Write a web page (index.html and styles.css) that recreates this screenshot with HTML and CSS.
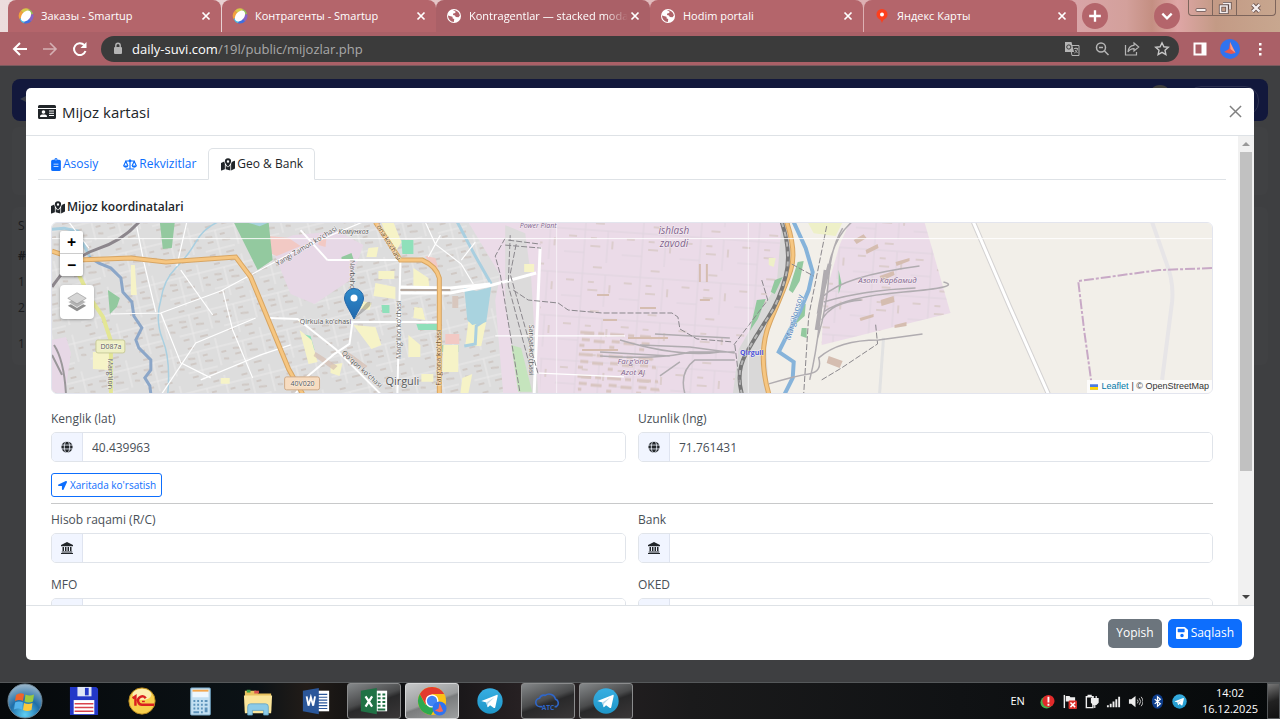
FILE: index.html
```html
<!DOCTYPE html>
<html lang="uz">
<head>
  <meta charset="UTF-8" />
  <title>Kontragentlar — stacked modal</title>
  <meta name="viewport" content="width=device-width, initial-scale=1.0" />
  <link rel="stylesheet" href="styles.css">
</head>
<body>

<!-- Icons -->
<svg class="sprite" width="0" height="0" aria-hidden="true">
  <defs>
    <linearGradient id="tg-bg" x1="0" y1="0" x2="0" y2="1"><stop offset="0" stop-color="#37aee2"/><stop offset="1" stop-color="#1e96c8"/></linearGradient>
    <radialGradient id="orb" cx=".5" cy=".9" r=".9"><stop offset="0" stop-color="#5fd0f5"/><stop offset=".5" stop-color="#1f6ea8"/><stop offset="1" stop-color="#9fb9cc"/></radialGradient>
    <linearGradient id="pin-bg" x1="0" y1="0" x2="0" y2="1"><stop offset="0" stop-color="#2e8bcb"/><stop offset="1" stop-color="#2268ad"/></linearGradient>
  </defs>
  <symbol id="i-close" viewBox="0 0 10 10"><path d="M1.500 1.500l7 7M8.500 1.500l-7 7" fill="none" stroke="currentColor" stroke-width="1.700"/></symbol>
  <symbol id="i-smartup" viewBox="0 0 16 16">
    <path d="M8 8L1.500 11A7.500 7.500 0 0 1 3 2.500z" fill="#f2a13c"/>
    <path d="M8 8L3 2.500A7.500 7.500 0 0 1 11 1z" fill="#d8c84a"/>
    <path d="M8 8l3-7a7.500 7.500 0 0 1 4.200 5z" fill="#8fbf5a"/>
    <path d="M8 8l7.200-2A7.500 7.500 0 0 1 13 13.500z" fill="#8a62c4"/>
    <path d="M8 8l5 5.500A7.500 7.500 0 0 1 6 15.200z" fill="#3f6fe0"/>
    <path d="M8 8l-2 7.200A7.500 7.500 0 0 1 1.500 11z" fill="#45bfe8"/>
    <ellipse cx="8" cy="8" rx="6.300" ry="4.200" transform="rotate(-50 8 8)" fill="#fff"/>
  </symbol>
  <symbol id="i-world" viewBox="0 0 16 16">
    <circle cx="8" cy="8" r="7" fill="#fff"/>
    <path d="M2 7.500l4.500 1.300.2 1.700 1.500.6-.3 2.900C4.500 13.800 2 11 2 7.500zM6.800 2.300c3.400-.7 6.600 1.800 7.100 5.100l-1.400 1.800-2.700-.2-.8-1.500-2-.4.200-1.600 2.100-.6.200-1.400z" fill="#b0636a"/>
  </symbol>
  <symbol id="i-ypin" viewBox="0 0 16 16"><path d="M8 1a5.500 5.500 0 0 1 5.500 5.500c0 3-2.400 4.300-3.800 5.200C8.700 12.500 8.500 14 8 15c-.5-1-.7-2.500-1.700-3.300C4.900 10.800 2.500 9.500 2.500 6.500A5.500 5.500 0 0 1 8 1z" fill="#fc3f1d"/><circle cx="8" cy="6.500" r="2" fill="#fff"/></symbol>
  <symbol id="i-card" viewBox="0 0 18 14"><path fill-rule="evenodd" d="M1.500 0h15A1.500 1.500 0 0 1 18 1.500V3H0V1.500A1.500 1.500 0 0 1 1.500 0zM0 4h18v8.500a1.500 1.500 0 0 1-1.500 1.500h-15A1.500 1.500 0 0 1 0 12.500zM2 12h7c0-1.800-1-2.500-2-2.500H4c-1 0-2 .7-2 2.500zM5.500 5.200a1.800 1.800 0 1 0 0 3.600 1.800 1.800 0 0 0 0-3.600zM11 5.500v1h5v-1zM11 7.800v1h5v-1zM11 10v1h5v-1z" fill="currentColor"/></symbol>
  <symbol id="i-clip" viewBox="0 0 12 16"><path fill-rule="evenodd" d="M6 0a2 2 0 0 1 1.900 2H10a2 2 0 0 1 2 2v10a2 2 0 0 1-2 2H2a2 2 0 0 1-2-2V4a2 2 0 0 1 2-2h2.100A2 2 0 0 1 6 0zM6 1.500a.8.8 0 1 0 0 1.600.8.8 0 0 0 0-1.600zM3 7v1h6V7zM3 10v1h6v-1z" fill="currentColor"/></symbol>
  <symbol id="i-scale" viewBox="0 0 20 16"><path d="M10 1.500V14M4.500 14.500h11M3.500 3H8.200M11.800 3h4.700M4 3.500L1.200 9.500M4 3.500l2.800 6M16 3.500l-2.800 6M16 3.500l2.800 6" fill="none" stroke="currentColor" stroke-width="1.600" stroke-linecap="round"/><circle cx="10" cy="2.800" r="2" fill="currentColor"/><path d="M.3 9.500h7.400a3.700 3 0 0 1-7.400 0zM12.300 9.500h7.400a3.700 3 0 0 1-7.400 0z" fill="currentColor"/></symbol>
  <symbol id="i-map" viewBox="0 0 18 16"><path fill-rule="evenodd" d="M9 0a4 4 0 0 1 4 4c0 2-2.600 5.300-3.600 6.500a.5.500 0 0 1-.8 0C7.600 9.300 5 6 5 4a4 4 0 0 1 4-4zm0 2.600a1.500 1.500 0 1 0 0 3 1.500 1.500 0 0 0 0-3zM0 6l4.200-1.700C4.500 6 5 7 5 7v7L.8 15.800A.6.6 0 0 1 0 15.300zM6 8.500c.8 1.300 1.400 2 1.800 2.500.6.700 1.800.7 2.400 0 .4-.5 1-1.200 1.800-2.500v7.200l-6-1.700zM13 7s.6-1.300.9-2.300L17.200 3.300a.6.6 0 0 1 .8.500v9.300L13 15.600z" fill="currentColor"/></symbol>
  <symbol id="i-globe" viewBox="0 0 16 16"><circle cx="8" cy="8" r="7.500" fill="currentColor"/><g fill="none" stroke="#f1f5ff" stroke-width="1.100"><ellipse cx="8" cy="8" rx="3.600" ry="8"/><path d="M0 5.400h16M0 10.600h16"/></g></symbol>
  <symbol id="i-bank" viewBox="0 0 16 16"><path d="M8 0l8 4v1.500H0V4zM2 6.500h2V12H2zM5.300 6.500h2V12h-2zM8.700 6.500h2V12h-2zM12 6.500h2V12h-2zM1 12.500h14V14H1zM0 14.500h16V16H0z" fill="currentColor"/></symbol>
  <symbol id="i-arrow" viewBox="0 0 512 512"><path d="M444.520 3.520L28.740 195.420c-47.970 22.390-31.980 92.750 19.190 92.750h175.910v175.910c0 51.170 70.360 67.170 92.750 19.190l191.900-415.780c15.990-38.380-25.590-79.970-63.970-63.970z" fill="currentColor"/></symbol>
  <symbol id="i-save" viewBox="0 32 448 448"><path d="M433.941 129.941l-83.882-83.882A48 48 0 0 0 316.118 32H48C21.490 32 0 53.490 0 80v352c0 26.510 21.490 48 48 48h352c26.510 0 48-21.490 48-48V163.882a48 48 0 0 0-14.059-33.941zM224 416c-35.346 0-64-28.654-64-64s28.654-64 64-64 64 28.654 64 64-28.654 64-64 64zm96-304.520V212c0 6.627-5.373 12-12 12H76c-6.627 0-12-5.373-12-12V108c0-6.627 5.373-12 12-12h228.520c3.183 0 6.235 1.264 8.485 3.515l3.480 3.480A11.996 11.996 0 0 1 320 111.480z" fill="currentColor"/></symbol>
  <symbol id="i-telegram" viewBox="0 0 28 28"><circle cx="14" cy="14" r="13.500" fill="url(#tg-bg)"/><path d="M5.500 13.700L21 7.500c.8-.3 1.400.2 1.200 1.200l-2.600 12c-.2.900-.8 1.100-1.500.7l-4-3-2 1.900c-.4.400-.8.400-.9-.2l-1.200-4.500-4.400-1.300c-.8-.2-.8-.4-.1-.6z" fill="#fff"/><path d="M10 15.600l8.800-5.500-7 6.700-.4 3z" fill="#b9d9ea"/></symbol>
</svg>

<!-- Browser tabs -->
<header class="tabstrip">
  <div class="tab"><svg class="fav"><use href="#i-smartup"/></svg><span class="tab-title">Заказы - Smartup</span><button class="tab-close" aria-label="Close"><svg><use href="#i-close"/></svg></button></div>
  <div class="tab"><svg class="fav"><use href="#i-smartup"/></svg><span class="tab-title">Контрагенты - Smartup</span><button class="tab-close" aria-label="Close"><svg><use href="#i-close"/></svg></button></div>
  <div class="tab active"><svg class="fav"><use href="#i-world"/></svg><span class="tab-title fade">Kontragentlar — stacked moda</span><button class="tab-close" aria-label="Close"><svg><use href="#i-close"/></svg></button></div>
  <div class="tab"><svg class="fav"><use href="#i-world"/></svg><span class="tab-title">Hodim portali</span><button class="tab-close" aria-label="Close"><svg><use href="#i-close"/></svg></button></div>
  <div class="tab"><svg class="fav"><use href="#i-ypin"/></svg><span class="tab-title">Яндекс Карты</span><button class="tab-close" aria-label="Close"><svg><use href="#i-close"/></svg></button></div>
  <button class="round-btn" aria-label="New tab"><svg viewBox="0 0 12 12"><path d="M6 1v10M1 6h10" fill="none" stroke="#fff" stroke-width="2"/></svg></button>
  <button class="round-btn list-btn" aria-label="Search tabs"><svg viewBox="0 0 12 12"><path d="M2 4l4 4 4-4" fill="none" stroke="#fff" stroke-width="2"/></svg></button>
  <div class="win-controls">
    <button aria-label="Minimize"><svg viewBox="0 0 14 14"><rect x="2" y="7.500" width="10" height="3" rx="1" fill="#f5eeee" stroke="#6a5350" stroke-width=".8"/></svg></button>
    <button aria-label="Restore"><svg viewBox="0 0 14 14"><g fill="none" stroke="#5b4a48" stroke-width="3.200"><path d="M5 2.500h7v6M2.500 5h6.500v6.500H2.500z"/></g><g fill="none" stroke="#f5eeee" stroke-width="1.700"><path d="M5 2.500h7v6M2.500 5h6.500v6.500H2.500z"/></g></svg></button>
    <button class="win-x" aria-label="Close window"><svg viewBox="0 0 14 14"><path d="M3.500 3.500l7 7M10.500 3.500l-7 7" stroke="#6a5350" stroke-width="4"/><path d="M3.500 3.500l7 7M10.500 3.500l-7 7" stroke="#f5eeee" stroke-width="2.400"/></svg></button>
  </div>
</header>

<!-- Toolbar -->
<nav class="toolbar">
  <button class="nav-btn" aria-label="Back"><svg viewBox="0 0 16 16"><path d="M15 8H2.500M8 2L2 8l6 6" fill="none" stroke="#fff" stroke-width="2"/></svg></button>
  <button class="nav-btn dim" aria-label="Forward"><svg viewBox="0 0 16 16"><path d="M1 8h12.500M8 2l6 6-6 6" fill="none" stroke="#fff" stroke-width="1.600"/></svg></button>
  <button class="nav-btn" aria-label="Reload"><svg viewBox="0 0 16 16"><path d="M13.500 10A5.900 5.900 0 1 1 12.200 4" fill="none" stroke="#fff" stroke-width="2"/><path d="M14.500 1v6h-6z" fill="#fff"/></svg></button>
  <div class="omnibox">
    <svg class="lock" viewBox="0 0 10 13"><rect x="1" y="5" width="8" height="7" rx="1" fill="#b5b5b5"/><path d="M2.800 5.500V3.500a2.200 2.200 0 0 1 4.400 0v2" fill="none" stroke="#b5b5b5" stroke-width="1.400"/></svg>
    <span class="url"><b>daily-suvi.com</b>/19l/public/mijozlar.php</span>
    <button class="omni-btn" aria-label="Translate"><svg viewBox="0 0 16 16"><path d="M6 4.500h9v10H8z" fill="none" stroke="#b5b5b5"/><path d="M1 1h6.500l2.500 10H1z" fill="#b5b5b5"/><circle cx="4.800" cy="6" r="2.100" fill="none" stroke="#3b3b3b"/><path d="M10 7.500h4M12 6.500v1M13.500 8c-.5 2-2 3.500-3 4M11 9l2.500 3" fill="none" stroke="#b5b5b5" stroke-width=".9"/></svg></button>
    <button class="omni-btn" aria-label="Zoom"><svg viewBox="0 0 16 16"><g fill="none" stroke="#b5b5b5" stroke-width="1.500"><circle cx="7" cy="6.500" r="4.500"/><path d="M10.500 10l4 4M5 6.500h4"/></g></svg></button>
    <button class="omni-btn" aria-label="Share"><svg viewBox="0 0 16 16"><g fill="none" stroke="#b5b5b5" stroke-width="1.200"><path d="M1.500 4v10h11v-3"/><path d="M10 2l4.700 4L10 10V7.700C7.500 7.700 5.500 8.500 4 11c.3-4 2.500-6.500 6-6.700z"/></g></svg></button>
    <button class="omni-btn" aria-label="Bookmark"><svg viewBox="0 0 16 16"><path d="M8 1.800l1.900 4 4.400.5-3.300 3 .9 4.300L8 11.400l-3.900 2.200.9-4.300-3.300-3 4.400-.5z" fill="none" stroke="#c8c8c8" stroke-width="1.400"/></svg></button>
  </div>
  <button class="nav-btn" aria-label="Side panel"><svg viewBox="0 0 16 16"><path fill-rule="evenodd" d="M1.500 1.500h13v13h-13zM3.500 3.500v9h6v-9z" fill="#fff"/></svg></button>
  <button class="nav-btn profile" aria-label="Profile"><svg viewBox="0 0 20 20"><circle cx="10" cy="10" r="10" fill="#2f73f0"/><path d="M10 3l5.500 11-4.500 1-7-2 5-3z" fill="#e8584e"/><path d="M10 3l5.500 11-5-4z" fill="#f9a08e"/></svg></button>
  <button class="nav-btn" aria-label="Menu"><svg viewBox="0 0 16 16"><g fill="#fff"><rect x="7" y="2" width="2.500" height="2.500"/><rect x="7" y="7" width="2.500" height="2.500"/><rect x="7" y="12" width="2.500" height="2.500"/></g></svg></button>
</nav>

<!-- Page with modal -->
<main class="page">
  <div class="navbar"><span class="back">◀</span><span class="bell"></span><span class="exit"></span></div>
  <div class="card filters"></div>
  <div class="card list">
    <p>S</p>
    <p><b>#</b></p>
    <p>1</p>
    <p>2</p>
    <p class="pager">1</p>
  </div>

  <section class="modal" role="dialog" aria-labelledby="modal-title">
    <div class="modal-header">
      <svg class="title-icon"><use href="#i-card"/></svg>
      <h1 id="modal-title">Mijoz kartasi</h1>
      <button class="btn-close" aria-label="Yopish"><svg viewBox="0 0 14 14"><path d="M1 1l12 12M13 1L1 13" fill="none" stroke="#808080" stroke-width="1.600"/></svg></button>
    </div>

    <div class="modal-main">
      <div class="modal-body">
        <div class="nav-tabs">
          <a href="#asosiy"><svg class="clip"><use href="#i-clip"/></svg>Asosiy</a>
          <a href="#rekvizitlar"><svg><use href="#i-scale"/></svg>Rekvizitlar</a>
          <a href="#geo" class="active"><svg><use href="#i-map"/></svg>Geo &amp; Bank</a>
        </div>

        <div class="pane" id="geo">
          <h2><svg><use href="#i-map"/></svg>Mijoz koordinatalari</h2>

          <div class="map">
            <svg class="tiles" viewBox="51 222 1162 172" preserveAspectRatio="xMidYMid slice">
              <defs>
                <pattern id="homes" width="46" height="38" patternUnits="userSpaceOnUse" patternTransform="rotate(-14)">
                  <path d="M0 9h46M0 28h30M14 9v29M34 0v28" stroke="#ebeaea" stroke-width="1" fill="none"/>
                  <path d="M3 14l7 1M4 20h6M18 14h5M19 20l8 1M37 15h5M38 22l5 1M3 33h6M20 33h8M5 4h6M22 4h6" stroke="#d0c9c5" stroke-width="2"/>
                </pattern>
                <pattern id="plant" width="58" height="44" patternUnits="userSpaceOnUse" patternTransform="rotate(4)">
                  <path d="M0 12h58M20 0v44M0 35h20M43 12v32" stroke="#dfd4de" stroke-width="1" fill="none"/>
                  <path d="M4 19h8M26 20h6M26 28h10M48 22v8M30 5h9" stroke="#dccdcd" stroke-width="2"/>
                </pattern>
                <pattern id="blocks" width="30" height="22" patternUnits="userSpaceOnUse" patternTransform="rotate(4)">
                  <path d="M2 5h14M20 5h6M4 12h8M16 13h11M2 18h5" stroke="#d8c5c0" stroke-width="3"/>
                </pattern>
              </defs>
              <rect x="51" y="222" width="1162" height="172" fill="#f2efe9"/>

              <!-- land use -->
              <path d="M51 222H480L510 270L540 394H51z" fill="#dddddd"/>
              <path d="M51 222H480L510 270L540 394H51z" fill="url(#homes)"/>
              <path d="M468 222H784L788 255L750 340L735 394H503L495 300L500 275z" fill="#ebdbe8"/>
              <path d="M505 225l20 8 6 45 7 116h-18l-15-90z" fill="#dcdbdb"/>
              <path d="M540 222H784L788 255L750 340L735 394H540z" fill="url(#plant)"/>
              <path d="M575 330h75l10 64h-82z" fill="url(#blocks)"/>
              <path d="M782 222h8l2 40-26 80 3 52h-36l6-45 38-65z" fill="#d9d8d8"/>
              <path d="M850 222H925L951 313L822 345L824 300L840 245z" fill="#ebdbe8"/>
              <path d="M850 222H925L951 313L822 345L824 300L840 245z" fill="url(#plant)"/>
              <path d="M270 245l22-10 45-4 26 14-13 35-36 24-24-10z" fill="#e7d8e6"/>
              <path d="M51 340l14-3 5 16-6 41H51z" fill="#e7d8e6"/>
              <path d="M268 236l20 2 12 8-24 10-9-4zM318 238l8-1-1 10-7-2zM425 256l10 2 3 10-8-3zM445 334h14v10h-14z" fill="#f2c9c4"/>
              <g fill="#93c99f">
                <path d="M159 222h15l-3 26-9 1zM233 222h35l4 38-15 10zM107 290l12 8-3 9-7 7z"/>
                <path d="M341 257l10-4 2 6-12 1zM442 345h16v7h-16z"/>
                <path d="M775 280l8-3-8 17-4-2zM757 300l9-1-8 20-8 12zM798 262l6-1-4 20-7 12-4-3zM800 305l6-1-1 12-9 8zM802 328h5v10l-6-2zM839 270l3 14-3 10z"/>
              </g>
              <path d="M511 345l10 3 11 44h-14z" fill="#c5e4bd"/>
              <path d="M401 240h12v14h-11zM381 305h8v8h-7zM416 324h22v6h-20zM302 334l8 2 4 14-5 2z" fill="#8fe0ba"/>
              <g fill="#f6f3c7">
                <path d="M130 265h4l2 30h-6zM92 352h18l-2 18-16-1zM381 222h12l8 20-7 12-8-18zM378 271h16v8h-16zM413 268l15 10 1 9h-16zM375 283l20 4v12l-22-3zM355 300l16 3-2 7-12-2zM414 307l8 1 3 12-12-2zM353 325l22 2 6 18-10 4zM408 335l12 10v12h-12zM443 345h15v27h-16zM468 322h18l-5 24h-16zM299 330l12 10 6 22-9 2zM330 365l12-2-3 13-9-3zM421 374h12v8h-12zM462 378l10-4-4 20h-8zM368 248l10-1-2 10h-10zM524 264h10v8h-10zM220 378h9v6h-9z"/>
                <path d="M808 222h35l-7 14-22-3zM769 258h7l-2 9-5-2z" fill="#eef0c8"/>
              </g>
              <g fill="#d5bdb0">
                <path d="M829 356l14 5-3 7-13-5zM854 240l10-6 3 4-10 6zM866 250l12-6 1 4-12 6zM880 276l14-5 1 4-13 6zM896 262l14-4v3l-13 5zM881 300l13-4 1 6-13 4zM860 318l14-4v3l-13 4zM895 325l12-3v4l-12 2z"/>
                <path d="M315 352l22 14-4 4-20-14zM345 350l22 16-3 3-22-15zM452 296h6v12h-6z" opacity=".7"/>
                <path d="M597 295h12M603 320h14M628 338h40M582 350h36M700 264v18M707 264v18M700 300h10M640 308h16" stroke="#d5bdb0" stroke-width="2"/>
              </g>

              <!-- water -->
              <g fill="none" stroke="#a9cfe0">
                <path d="M51 229l12-1 14 3 6 14 6 12" stroke-width="3"/>
                <path d="M217 222q-14 6-22 20t-20 26-15 32q-6 20 2 40t5 54" stroke-width="1.500"/>
                <path d="M457 222l18 34 16 28" stroke-width="3"/>
                <path d="M485 320l-9 6-1 18-11 2" stroke-width="3"/>
              </g>
              <path d="M464 288l12 3 15-4-5 35-14 3-5-5z" fill="#a9d3df"/>
              <path d="M88 257l10 6 12 5 10 10 2 14 9 10 2 14 8 12-6 12 3 8 12 12v10l-6 8 5 8 1 8" fill="none" stroke="#8ba6c8" stroke-width="3"/>
              <path d="M794 222l12 26 7 24-4 18-9 22-12 22-9 18 15 10-1 16-8 16" fill="none" stroke="#86b3da" stroke-width="4"/>
              <path d="M245 222l14 4 10-4" fill="#a9d3df"/>

              <!-- streets -->
              <g fill="none" stroke="#fff" stroke-width="2">
                <path d="M110 314l50-1 60-22 82-44 60-25M180 270l32 45M160 313l20 50 30 15M135 222l8 40 12 50M186 222l-10 44M255 318l-60 25-40 60M200 380l60-25 30-10M222 290l10 40 20 48M68 222l20 26" stroke-width="1.200"/>
                <path d="M269 318l28 1 38 30 45 45M335 353l-30 25-10 16M327 260h73M300 230l27 30M400 262l-3 132M350 322h88M352 322l-3 22-18 12"/>
                <path d="M400 287l50 1 40-4M400 293h50l42-8 44-12" stroke-width="3"/>
                <path d="M540 247l-6 147" stroke-width="3"/>
                <path d="M425 222l10 22 26 20 12 20M440 235l-12 22M461 260l14-18M495 336h130M534 373l90 4" stroke-width="1.200"/>
              </g>
              <path d="M400 290h50" stroke="#b5a79d" stroke-width="2" fill="none"/>
              <path d="M974 222l36 84 39 88" fill="none" stroke="#d4d2d2" stroke-width="5"/>
              <path d="M974 222l36 84 39 88" fill="none" stroke="#fff" stroke-width="3"/>
              <path d="M1153 222l14 40q8 20 6 40l-10 78" fill="none" stroke="#e7e5e7" stroke-width="4"/>
              <path d="M884 338l-4 56" fill="none" stroke="#e2e2e2" stroke-width="3"/>
              <path d="M78 275l12 24 12 18 8 24v53" fill="none" stroke="#e3e694" stroke-width="4"/>
              <g fill="none" stroke="#d8a562" stroke-width="5">
                <path d="M51 251l26 9 53-2 35 4 70-5 15 20 38 92 14 25"/>
                <path d="M375 222l25 38h22q14 6 17 18v116M787 222q10 30 4 48t-20 50-2 74"/>
              </g>
              <g fill="none" stroke="#f6c681" stroke-width="3">
                <path d="M51 251l26 9 53-2 35 4 70-5 15 20 38 92 14 25"/>
                <path d="M375 222l25 38h22q14 6 17 18v116M787 222q10 30 4 48t-20 50-2 74"/>
              </g>

              <!-- railways and power lines -->
              <path d="M51 287q20-30 45-38t42-27" fill="none" stroke="#8c868c" stroke-width="3"/>
              <path d="M53 345q10 15 12 49M51 355l10 20" fill="none" stroke="#9a979a" stroke-width="2"/>
              <path d="M782 222q10 30 4 54t-18 42-22 36-4 40" fill="none" stroke="#777" stroke-width="4"/>
              <path d="M782 222q10 30 4 54t-18 42-22 36-4 40" fill="none" stroke="#b9b9b9" stroke-width="2" stroke-dasharray="5 5"/>
              <g fill="none" stroke="#b0acb0" stroke-width="1.500">
                <path d="M852 222q-16 14-22 40t-10 60-10 58M843 228q-12 20-14 50t-11 60M824 296q20-20 96-30M824 302q40-12 92-14M824 312q20-15 80-20t40-10M822 320q10-18 40-20M769 384q26-8 40-10t10-16q20-18 60-18l44-6"/>
                <path d="M640 345l50 2 45 6M600 356q60 4 90-4h45M620 340q60 18 100 12M685 394q-6-22 10-34h40M655 334l75 4M680 362l-20 14M600 352l70 4"/>
              </g>
              <path d="M826 270q-4 30-9 60M830 264q-8 30-11 50" fill="none" stroke="#b0acb0" stroke-width="4"/>
              <g fill="none" stroke="#8a878c" stroke-width="1" stroke-dasharray="6 2">
                <path d="M505 238l-10 18 5 18 20 120M510 235l-2 50 24 90M516 244l-6 30 28 100M505 245l36 3M508 240l32 4"/>
                <path d="M513 290l15 10 30 3 10 7 34 3h70l6 4 2 12 17 10 36 3M827 226l-10 50-8 40-5 78M735 345l5 40M762 280l6 20-34 45M822 380l20-12 36-24-2-20M792 264l22 12"/>
              </g>
              <path d="M1213 268l-53 2-81 11 6 50 7 50" fill="none" stroke="#c8a9c6" stroke-width="2" stroke-dasharray="10 2 3 2"/>

              <!-- tile seams -->
              <path d="M51 238.500h1162" stroke="#fff" stroke-width="1" opacity=".9"/>
              <path d="M556.500 222v172M748.500 222v172" stroke="#fff" stroke-width="1" opacity=".6"/>

              <!-- labels -->
              <g class="lbl">
                <rect x="95" y="340" width="29" height="13" rx="2" fill="#eff0c4" stroke="#c8ca9a"/>
                <text x="110" y="349" font-size="7">D087a</text>
                <rect x="284" y="377" width="35" height="13" rx="2" fill="#f7dcc0" stroke="#d0ab88"/>
                <text x="302" y="386" font-size="7">40V020</text>
                <text x="402" y="385" font-size="11">Qirguli</text>
                <text x="353" y="234" font-size="7" font-style="italic">Комунхоз</text>
                <text x="325" y="324" font-size="7">Qirkula ko'chasi</text>
                <text transform="translate(307 248) rotate(-31)" font-size="7">Yangi Zamon ko'chasi</text>
                <text transform="translate(350 276) rotate(90)" font-size="7">Navbahor</text>
                <text transform="translate(401 330) rotate(-90)" font-size="7">Marg'ilon ko'chasi</text>
                <text transform="translate(529 350) rotate(90)" font-size="7">Sanoat ko'chasi</text>
                <text transform="translate(386 243) rotate(58)" font-size="7" class="road">'ona ko'chasi</text>
                <text transform="translate(441 358) rotate(-90)" font-size="7" class="road">Farg'ona ko'chasi</text>
                <text transform="translate(360 371) rotate(42)" font-size="7">Qo'qon ko'chasi</text>
                <text transform="translate(107 374) rotate(90)" font-size="7">Marg'ilon</text>
                <g class="plant">
                  <text x="538" y="228" font-size="7">Power Plant</text>
                  <text x="674" y="234" font-size="10">ishlash</text>
                  <text x="674" y="247" font-size="10">zavodi</text>
                  <text x="633" y="364" font-size="8">Farg'ona</text>
                  <text x="633" y="375" font-size="8">Azot AJ</text>
                  <text x="888" y="283" font-size="8">Азот Карбамид</text>
                </g>
                <text x="752" y="355" font-size="7" class="station">Qirguli</text>
                <text transform="translate(797 318) rotate(-74)" font-size="8" class="river">Marg'ilonsoy</text>
              </g>
            </svg>

            <svg class="pin" viewBox="0 0 32 32"><path d="M10 31l14-11q4-4 2-6-3-1-7 5z" fill="#555" opacity=".35"/><path d="M10 .5A9.500 9.500 0 0 1 19.500 10c0 5-5 12-9.500 21C5.500 22 .5 15 .5 10A9.500 9.500 0 0 1 10 .5z" fill="url(#pin-bg)" stroke="#2467a8"/><circle cx="10" cy="10" r="3.500" fill="#fff"/></svg>

            <div class="map-controls">
              <div class="zoom"><button aria-label="Zoom in">+</button><button aria-label="Zoom out">−</button></div>
              <button class="layers" aria-label="Layers"><svg viewBox="0 0 26 26"><path d="M13 12l10 5-10 6-10-6z" fill="#8f8f8f"/><path d="M13 8l10 5-10 6-10-6z" fill="#b3b3b3" stroke="#fff" stroke-width=".8"/><path d="M13 3l10 6-10 6L3 9z" fill="#d6d6d6" stroke="#999" stroke-width=".7"/></svg></button>
            </div>

            <div class="credit">
              <svg viewBox="0 0 12 8"><path fill="#4c7be1" d="M0 0h12v4H0z"/><path fill="#ffd500" d="M0 4h12v3H0z"/><path fill="#e0bc00" d="M0 7h12v1H0z"/></svg>
              <a href="#leaflet">Leaflet</a> | © OpenStreetMap
            </div>
          </div>

          <div class="row">
            <div class="field">
              <label for="lat">Kenglik (lat)</label>
              <div class="input-group"><span><svg><use href="#i-globe"/></svg></span><input id="lat" type="text" value="40.439963" /></div>
            </div>
            <div class="field">
              <label for="lng">Uzunlik (lng)</label>
              <div class="input-group"><span><svg><use href="#i-globe"/></svg></span><input id="lng" type="text" value="71.761431" /></div>
            </div>
          </div>

          <button class="btn-outline"><svg><use href="#i-arrow"/></svg>Xaritada ko'rsatish</button>
          <hr>

          <div class="row">
            <div class="field">
              <label for="rc">Hisob raqami (R/C)</label>
              <div class="input-group"><span><svg><use href="#i-bank"/></svg></span><input id="rc" type="text" /></div>
            </div>
            <div class="field">
              <label for="bank">Bank</label>
              <div class="input-group"><span><svg><use href="#i-bank"/></svg></span><input id="bank" type="text" /></div>
            </div>
            <div class="field">
              <label for="mfo">MFO</label>
              <div class="input-group"><span></span><input id="mfo" type="text" /></div>
            </div>
            <div class="field">
              <label for="oked">OKED</label>
              <div class="input-group"><span></span><input id="oked" type="text" /></div>
            </div>
          </div>
        </div>
      </div>

      <div class="scrollbar" aria-hidden="true">
        <svg viewBox="0 0 16 16"><path d="M4 10l4-4 4 4z" fill="#999"/></svg>
        <div class="track"><div class="thumb"></div></div>
        <svg viewBox="0 0 16 16"><path d="M4 6l4 4 4-4z" fill="#444"/></svg>
      </div>
    </div>

    <div class="modal-footer">
      <button class="btn secondary">Yopish</button>
      <button class="btn primary"><svg><use href="#i-save"/></svg>Saqlash</button>
    </div>
  </section>
</main>

<!-- Taskbar -->
<footer class="taskbar">
  <button class="start" aria-label="Start"><svg viewBox="0 0 36 36"><circle cx="18" cy="18" r="17" fill="url(#orb)" stroke="#6f8796"/><path d="M9 12q4-3 8-1l-1 7q-4-2-8 0z" fill="#f0642b"/><path d="M18.500 11.500q4 2 8.500 0l-1 7q-4 2-8.500 0z" fill="#9bc940"/><path d="M8 19.500q4-2 8 0l-1 7q-4-2-8 0z" fill="#54b4ec"/><path d="M17 20q4 2 8.500 0l-1 7q-4 2-8.500 0z" fill="#fbc93a"/></svg></button>
  <button class="task" aria-label="Total Commander"><svg viewBox="0 0 32 32"><path d="M1 1h28l2 2v28H1z" fill="#2338c8"/><path d="M9 1h15v10H9z" fill="#dfe6f5"/><path d="M17 2h4v8h-4z" fill="#2338c8"/><path d="M5 15h22v15H5z" fill="#fff"/><path d="M6 19h20M6 23h20M6 27h20" stroke="#d8434d" stroke-width="1.500"/></svg></button>
  <button class="task" aria-label="1C"><svg viewBox="0 0 32 32"><circle cx="16" cy="16" r="14" fill="#f8d04d" stroke="#b98a20"/><ellipse cx="16" cy="9" rx="10" ry="6" fill="#fdeeb0"/><g fill="none" stroke="#d92020" stroke-width="2.600"><path d="M6 13l3-2v10M20 13a4.500 4.500 0 1 0-3 7h12"/><path d="M19 16.500h-3" stroke-width="1.500"/></g></svg></button>
  <button class="task" aria-label="Calculator"><svg viewBox="0 0 32 32"><rect x="6" y="2" width="21" height="29" rx="1" fill="#c3e0f2" stroke="#6c9dbd"/><path d="M8 4h17v8H8z" fill="#eef7fd"/><path d="M8 4h17v2H8z" fill="#f2a64c"/><path d="M9 15h2v2H9zM13 15h2v2h-2zM17 15h2v2h-2zM21 15h3v2h-3zM9 19h2v2H9zM13 19h2v2h-2zM17 19h2v2h-2zM21 19h3v2h-3zM9 23h2v2H9zM13 23h2v2h-2zM17 23h2v2h-2zM21 23h3v5h-3zM9 27h6v2H9zM17 27h2v2h-2z" fill="#5d93bb"/></svg></button>
  <button class="task" aria-label="Explorer"><svg viewBox="0 0 32 32"><path d="M2 5h12l2 3h14v19H2z" fill="#e9c25f"/><path d="M4 4h4v3H4z" fill="#3da04a"/><path d="M12 5h5v3h-5z" fill="#d9534f"/><path d="M1 10h30l-1 19H2z" fill="#fae59b"/><path d="M5 31V22q0-3 3-3h16q3 0 3 3v9h-5v-5H10v5z" fill="#8ccbe8" stroke="#5d9fc0" stroke-width=".8"/></svg></button>
  <button class="task" aria-label="Word"><svg viewBox="0 0 32 32"><path d="M16 5h14v22H16z" fill="#fff"/><path d="M18 9h10M18 12h10M18 15h10M18 18h10M18 21h10M18 24h10" stroke="#2b579a" stroke-width="1.300"/><path d="M2 5l17-3v28L2 27z" fill="#2b579a"/><path d="M6 11l2 10 2.500-9 2.500 9 2-10" fill="none" stroke="#fff" stroke-width="2"/></svg></button>
  <button class="task open" aria-label="Excel"><svg viewBox="0 0 32 32"><path d="M16 5h14v22H16z" fill="#fff"/><path d="M20 9h3M25 9h3M20 13h3M25 13h3M20 17h3M25 17h3M20 21h3M25 21h3M20 25h8" stroke="#207245" stroke-width="2"/><path d="M2 5l17-3v28L2 27z" fill="#207245"/><path d="M7 11l7 11M14 11L7 22" stroke="#fff" stroke-width="2.400"/></svg></button>
  <button class="task open current" aria-label="Chrome"><svg viewBox="0 0 32 32"><circle cx="16" cy="16" r="15" fill="#fbc116"/><path d="M3 8.500A15 15 0 0 1 29 8.500H16z" fill="#e33b2e"/><path d="M3 8.500A15 15 0 0 0 15 31l7-12-6-3-7 4z" fill="#2da94f"/><path d="M3 8.500l6 11 7-11z" fill="#e33b2e"/><circle cx="16" cy="16" r="7" fill="#fff"/><circle cx="16" cy="16" r="5.500" fill="#4285f4"/><circle cx="24" cy="24" r="7.500" fill="#2f73f0"/><path d="M24 18l4 9-4 1-5-2 4-2z" fill="#f0685a"/></svg></button>
  <button class="task" aria-label="Telegram"><svg viewBox="0 0 32 32"><use href="#i-telegram" x="2" y="2" width="28" height="28"/></svg></button>
  <button class="task open" aria-label="ATC"><svg viewBox="0 0 32 32"><path d="M10 22H8a4.500 4.500 0 0 1-1-9 5 5 0 0 1 6-3 7 7 0 0 1 11 4 4.500 4.500 0 0 1 1 8h-2" fill="none" stroke="#2f66c8" stroke-width="1.700"/><text x="16" y="26" font-size="7" font-weight="bold" text-anchor="middle" fill="#2f66c8">ATC</text></svg></button>
  <button class="task open" aria-label="Telegram"><svg viewBox="0 0 32 32"><use href="#i-telegram" x="2" y="2" width="28" height="28"/></svg></button>

  <div class="tray">
    <span class="lang">EN</span>
    <svg viewBox="0 0 16 16"><circle cx="7" cy="9" r="6.500" fill="#47b04b"/><circle cx="9" cy="7.500" r="6.500" fill="#e02a2a"/><path d="M9 3v6M9 10.500v2" stroke="#fff" stroke-width="2"/></svg>
    <svg viewBox="0 0 16 16"><path d="M2.500 1v14" stroke="#eee" stroke-width="1.500"/><path d="M4 2h4l1 1.500h5V9H8L7 8H4z" fill="#eee"/><rect x="7" y="7" width="9" height="9" rx="1" fill="#d8302a"/><path d="M9 9l5 5M14 9l-5 5" stroke="#fff" stroke-width="1.600"/></svg>
    <svg viewBox="0 0 16 16"><path d="M2.500 3h7v11.500h-7zM4.500 1.500h3V3h-3z" fill="none" stroke="#eee" stroke-width="1.500"/><path d="M8 5h7v4l-2 2h-3L8 9zM9.500 2v3M13 2v3M11.500 11v4" fill="#eee" stroke="#eee" stroke-width="1.300"/></svg>
    <svg viewBox="0 0 16 16"><path d="M1 12h2v2H1zM4 10.500h2V14H4zM7 8h2v6H7zM10 5.500h2V14h-2zM13 3h2v11h-2z" fill="#eee"/></svg>
    <svg viewBox="0 0 16 16"><path d="M1 5.500h2.500L8 2v12L3.500 10.500H1z" fill="#eee"/><path d="M10 6q1.500 2 0 4M12 4.500q3 3.500 0 7M14 3q4 5 0 10" fill="none" stroke="#ccc"/></svg>
    <svg viewBox="0 0 16 16"><ellipse cx="8" cy="8" rx="6" ry="7.800" fill="#0d3d8c"/><path d="M5 5.500l6 5L8 13V3l3 2.500-6 5" fill="none" stroke="#fff" stroke-width="1.300"/></svg>
    <svg viewBox="0 0 28 28"><use href="#i-telegram"/></svg>
    <div class="clock"><span>14:02</span><span>16.12.2025</span></div>
    <button class="desktop" aria-label="Show desktop"></button>
  </div>
</footer>

</body>
</html>
```

FILE: styles.css
```css
html, body {
  margin: 0;
  padding: 0;
  height: 100%;
  overflow: hidden;
}

body {
  display: flex;
  flex-direction: column;
  font-family: "Open Sans", "Noto Sans", sans-serif;
  font-size: 12px;
  line-height: 18px;
  color: #212529;
  background: #3e3f41;
}

button, input {
  font: inherit;
  box-sizing: border-box;
}

button {
  padding: 0;
  border: none;
  background: none;
  cursor: pointer;
}

a {
  text-decoration: none;
}

svg {
  display: block;
  flex: none;
}

.sprite {
  position: absolute;
}

/* Browser tabs */
.tabstrip {
  display: flex;
  align-items: flex-start;
  flex: none;
  height: 32px;
  padding-left: 8px;
  background: linear-gradient(90deg, #ecdcdc 0, #d9a5a8 84%, #d3a09b 88%, #c48f82 90%, #dfa6a6 92%, #c39a85 95%, #c8a78f 100%);
}

.tab {
  display: flex;
  align-items: center;
  flex: 0 1 213px;
  min-width: 0;
  height: 32px;
  padding: 0 8px 0 10px;
  box-sizing: border-box;
  margin-right: 1px;
  border-radius: 8px 8px 0 0;
  background: #b4656b;
  color: #fff;
}

.tab:has(+ .active), .tab.active {
  flex-basis: 214px;
  margin-right: 0;
}

.tab.active {
  background: #aa6067;
}

.fav {
  width: 16px;
  height: 16px;
  margin-right: 7px;
}

.tab-title {
  flex: 1;
  overflow: hidden;
  white-space: nowrap;
  font-size: 11px;
}

.tab-title.fade {
  -webkit-mask-image: linear-gradient(90deg, #000 85%, transparent);
  mask-image: linear-gradient(90deg, #000 85%, transparent);
}

.tab-close {
  width: 14px;
  color: #fff;
}

.tab-close svg {
  width: 10px;
  height: 10px;
  margin: 0 auto;
}

.round-btn {
  display: flex;
  align-items: center;
  justify-content: center;
  width: 26px;
  height: 26px;
  margin: 3px 0 0 4px;
  border-radius: 50%;
  background: #b4656b;
}

.round-btn svg {
  width: 14px;
  height: 14px;
}

.list-btn {
  margin-left: auto;
}

.win-controls {
  display: flex;
  height: 16px;
  margin: 0 4px 0 8px;
  box-sizing: border-box;
  border: 1px solid #7d655c;
  border-top: none;
  border-radius: 0 0 4px 4px;
}

.win-controls button {
  width: 24px;
  border-right: 1px solid #7d655c;
}

.win-controls .win-x {
  width: 38px;
  border-right: none;
}

.win-controls svg {
  width: 14px;
  height: 14px;
  margin: 0 auto;
}

/* Toolbar */
.toolbar {
  display: flex;
  align-items: center;
  flex: none;
  height: 34px;
  padding: 0 5px;
  box-sizing: border-box;
  border-bottom: 1px solid #7b5a5e;
  background: #aa6067;
}

.nav-btn {
  display: flex;
  align-items: center;
  justify-content: center;
  width: 30px;
  height: 30px;
}

.nav-btn svg {
  width: 16px;
  height: 16px;
}

.nav-btn.dim {
  opacity: .5;
}

.nav-btn.profile svg {
  width: 20px;
  height: 20px;
}

.omnibox {
  display: flex;
  align-items: center;
  flex: 1;
  height: 26px;
  margin: 0 6px;
  padding: 0 2px 0 12px;
  border-radius: 13px;
  background: #3b3b3b;
}

.lock {
  width: 10px;
  height: 13px;
  margin-right: 9px;
}

.url {
  flex: 1;
  font-size: 13px;
  color: #a9a9a9;
}

.url b {
  font-weight: 400;
  color: #fff;
}

.omni-btn {
  width: 30px;
}

.omni-btn svg {
  width: 16px;
  height: 16px;
  margin: 0 auto;
}

/* Page behind the modal */
.page {
  position: relative;
  flex: 1;
  min-height: 0;
  padding: 13px 12px;
  overflow: hidden;
  color: #1b1c1e;
}

.navbar {
  display: flex;
  align-items: flex-start;
  height: 42px;
  padding: 0 9px 0 8px;
  border-radius: 8px;
  background: #12183c;
  color: #3a3c48;
}

.back {
  flex: 1;
  padding-top: 10px;
}

.bell {
  width: 22px;
  height: 22px;
  margin: 6px 16px 0 0;
  border-radius: 50%;
  background: #3f3f3d;
}

.exit {
  width: 70px;
  height: 28px;
  margin-top: 7px;
  border: 1px solid #2c3150;
  border-radius: 14px;
}

.card {
  margin-top: 6px;
  border-radius: 6px;
  background: #404143;
}

.filters {
  height: 68px;
}

.list {
  padding: 10px 6px 12px;
  margin-top: 12px;
}

.list p {
  margin: 0 0 8px;
}

.list p:nth-child(1) {
  margin-bottom: 12px;
}

.list p.pager {
  margin: 18px 0 0;
}

/* Modal */
.modal {
  position: absolute;
  inset: 22px 26px;
  display: flex;
  flex-direction: column;
  border-radius: 5px;
  background: #fff;
  color: #212529;
  overflow: hidden;
}

.modal-header {
  display: flex;
  align-items: center;
  flex: none;
  height: 47px;
  padding: 0 12px;
  border-bottom: 1px solid #dee2e6;
}

.title-icon {
  width: 18px;
  height: 14px;
  margin-right: 6px;
}

.modal-header h1 {
  flex: 1;
  margin: 0;
  font-size: 15px;
  font-weight: 400;
}

.btn-close svg {
  width: 13px;
  height: 13px;
}

.modal-main {
  display: flex;
  flex: 1;
  min-height: 0;
}

.modal-body {
  flex: 1;
  min-width: 0;
  padding: 12px;
  overflow: hidden;
}

.nav-tabs {
  display: flex;
  height: 31px;
  border-bottom: 1px solid #dee2e6;
}

.nav-tabs a {
  display: flex;
  align-items: center;
  gap: 2px;
  height: 32px;
  padding: 0 11px 0 12px;
  box-sizing: border-box;
  border: 1px solid transparent;
  border-radius: 5px 5px 0 0;
  color: #0d6efd;
}

.nav-tabs a.active {
  border-color: #dee2e6 #dee2e6 #fff;
  background: #fff;
  color: #212529;
}

.nav-tabs svg, .pane h2 svg {
  width: 14px;
  height: 13px;
}

.nav-tabs .clip {
  width: 10px;
}

.pane {
  padding: 18px 13px 0;
}

.pane h2 {
  display: flex;
  align-items: center;
  gap: 2px;
  margin: 0 0 6px;
  font-size: 12px;
  font-weight: 600;
}

.map {
  position: relative;
  height: 172px;
  margin-bottom: 16px;
  box-sizing: border-box;
  border: 1px solid #e3e5ee;
  border-radius: 6px;
  overflow: hidden;
}

.tiles {
  width: 100%;
  height: 100%;
}

.lbl text {
  text-anchor: middle;
  fill: #555;
  paint-order: stroke;
  stroke: rgba(255,255,255,0.6);
  stroke-width: 1px;
}

.lbl .station {
  fill: #4a50d8;
  font-weight: 700;
}

.lbl .river {
  fill: #4d80b8;
}

.lbl .road {
  fill: #6b4a20;
}

.lbl .plant text {
  fill: #80608a;
  font-style: italic;
}

.pin {
  position: absolute;
  left: 25%;
  top: 65px;
  width: 32px;
  height: 32px;
  margin-left: 2px;
}

.map-controls {
  position: absolute;
  left: 8px;
  top: 8px;
}

.zoom {
  width: 23px;
  margin-bottom: 9px;
  border-radius: 2px;
  background: #fff;
  box-shadow: 0 1px 3px rgba(0,0,0,0.4);
}

.zoom button {
  display: block;
  width: 23px;
  height: 22px;
  font-size: 16px;
  font-weight: 700;
  color: #000;
}

.zoom button:first-child {
  height: 23px;
  border-bottom: 1px solid #ccc;
}

.layers {
  width: 34px;
  height: 34px;
  border-radius: 4px;
  background: #fff;
  box-shadow: 0 1px 3px rgba(0,0,0,0.3);
}

.layers svg {
  width: 24px;
  height: 24px;
  margin: 0 auto;
}

.credit {
  position: absolute;
  right: 0;
  bottom: 0;
  display: flex;
  align-items: center;
  gap: 3px;
  padding: 0 3px;
  line-height: 13px;
  font-family: "Liberation Sans", Arial, sans-serif;
  font-size: 9px;
  color: #333;
  background: rgba(255,255,255,0.8);
}

.credit svg {
  width: 8px;
  height: 6px;
}

.credit a {
  color: #0078a8;
}

.row {
  display: grid;
  grid-template-columns: 1fr 1fr;
  gap: 13px 12px;
}

.field label {
  display: block;
  margin-bottom: 4px;
  color: #495057;
}

.input-group {
  display: flex;
  height: 30px;
  box-sizing: border-box;
  border: 1px solid #e0e4ea;
  border-radius: 5px;
  overflow: hidden;
}

.input-group span {
  display: flex;
  align-items: center;
  justify-content: center;
  width: 30px;
  border-right: 1px solid #dfe4f0;
  background: #f1f5ff;
}

.input-group svg {
  width: 12px;
  height: 12px;
}

.input-group input {
  flex: 1;
  min-width: 0;
  padding: 1px 9px 0;
  border: none;
  outline: none;
  background: #fff;
  color: #495057;
}

.btn-outline {
  display: flex;
  align-items: center;
  gap: 3px;
  height: 24px;
  margin-top: 11px;
  padding: 0 5px 0 6px;
  border: 1px solid #0d6efd;
  border-radius: 3px;
  font-size: 10px;
  color: #0d6efd;
}

.btn-outline svg {
  width: 9px;
  height: 9px;
}

hr {
  height: 1px;
  margin: 6px 0 7px;
  border: none;
  background: #c8c9ca;
}

.scrollbar {
  display: flex;
  flex-direction: column;
  width: 16px;
  background: #f1f1f1;
}

.scrollbar svg {
  width: 16px;
  height: 16px;
}

.track {
  flex: 1;
  padding: 0 2px;
}

.thumb {
  height: 73%;
  background: #c1c1c1;
}

.modal-footer {
  display: flex;
  align-items: center;
  justify-content: flex-end;
  gap: 6px;
  flex: none;
  height: 54px;
  padding-right: 12px;
  border-top: 1px solid #dee2e6;
}

.btn {
  display: flex;
  align-items: center;
  gap: 3px;
  height: 29px;
  padding: 0 8px;
  border-radius: 5px;
  color: #fff;
}

.btn svg {
  width: 12px;
  height: 12px;
}

.secondary {
  background: #6c757d;
}

.primary {
  background: #0d6efd;
}

/* Taskbar */
.taskbar {
  display: flex;
  align-items: center;
  gap: 4px;
  flex: none;
  height: 37px;
  box-sizing: border-box;
  border-top: 1px solid #55585a;
  background: linear-gradient(90deg, #06090b 0, #0b1216 20%, #221c18 24%, #0b0d0f 30%, #2a2325 42%, #1a1a1b 54%, #101214 75%, #06090a 100%);
  color: #fff;
}

.start {
  width: 53px;
}

.start svg {
  width: 36px;
  height: 36px;
  margin: 0 auto 0 7px;
}

.task {
  width: 54px;
  height: 36px;
  box-sizing: border-box;
  border: 1px solid transparent;
  border-radius: 3px;
}

.task svg {
  width: 30px;
  height: 30px;
  margin: 0 auto;
}

.task.open {
  border-color: #8b8c8d;
  background: linear-gradient(160deg, #85888a 0, #4a4b4c 45%, #29292a 55%, #3a3738 100%);
}

.task.current {
  border-color: #d5d6d7;
  background: linear-gradient(160deg, #c6c8c9 0, #9b9d9e 50%, #7a7c7d 55%, #9d9fa0 100%);
}

.tray {
  display: flex;
  align-items: center;
  gap: 7px;
  height: 36px;
  margin-left: auto;
}

.tray svg {
  width: 15px;
  height: 15px;
}

.lang {
  margin-right: 8px;
  font-size: 11px;
}

.clock {
  display: flex;
  flex-direction: column;
  align-items: center;
  margin: 0 2px 0 8px;
  font-size: 11px;
  line-height: 16px;
}

.desktop {
  width: 13px;
  height: 36px;
  border: 1px solid #55585a;
  background: linear-gradient(160deg, #777 0, #222 50%, #111 100%);
}
```
